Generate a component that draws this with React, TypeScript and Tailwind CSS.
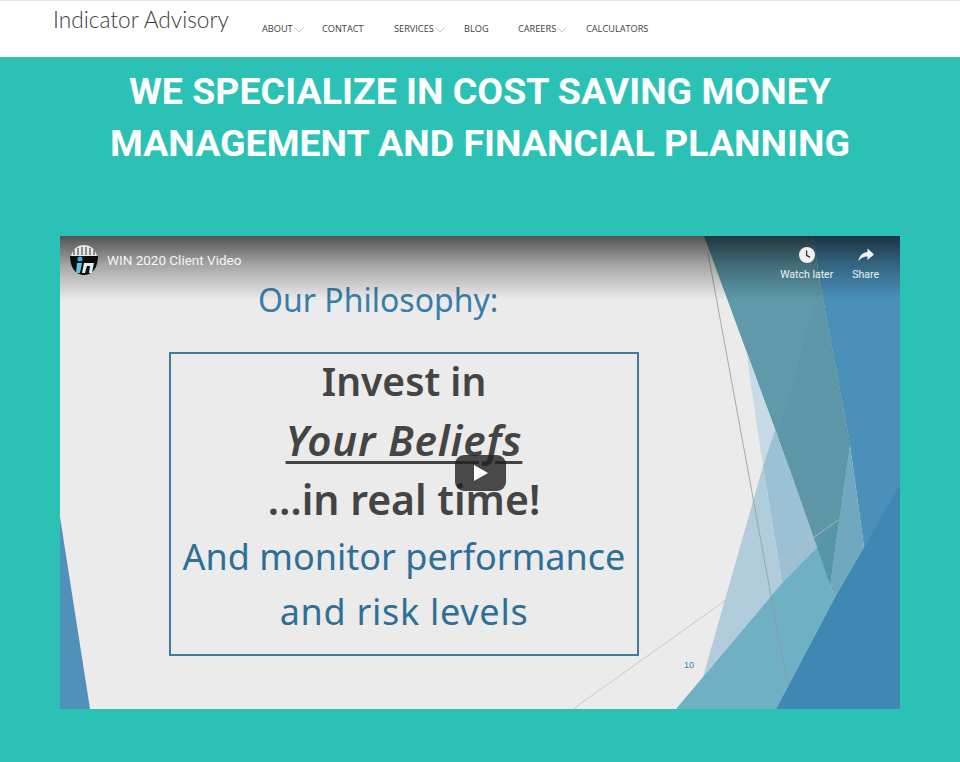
import React from 'react';

const navItems = [
  { label: 'ABOUT', width: 'w-[60px]', caret: true },
  { label: 'CONTACT', width: 'w-[72px]', caret: false },
  { label: 'SERVICES', width: 'w-[70px]', caret: true },
  { label: 'BLOG', width: 'w-[54px]', caret: false },
  { label: 'CAREERS', width: 'w-[68px]', caret: true },
  { label: 'CALCULATORS', width: 'w-auto', caret: false },
];

const Caret = () => (
  <svg width="10" height="6" viewBox="0 0 10 6" className="ml-[1px] mt-[2px]">
    <path d="M0.5 0.5 L5 5 L9.5 0.5" fill="none" stroke="#b5b5b5" strokeWidth="0.8" />
  </svg>
);

const Header = () => (
  <header className="h-[57px] bg-white border-t border-[#e4e4e4] flex">
    <div className="ml-[53px] w-[209px] mt-[4px] font-['Lato'] font-light text-[22.7px] leading-[30px] text-[#3c3c3c]">
      Indicator Advisory
    </div>
    <nav className="flex items-start pt-[21px] font-['Open_Sans'] text-[9.2px] leading-[14px] text-[#3d3d3d]">
      {navItems.map((item) => (
        <div key={item.label} className={`flex items-center ${item.width}`}>
          <span>{item.label}</span>
          {item.caret && <Caret />}
        </div>
      ))}
    </nav>
  </header>
);

const SlideArt = () => (
  <svg className="absolute inset-0 w-full h-full" viewBox="60 236 840 473">
    <rect x="60" y="236" width="840" height="473" fill="#ebebeb" />
    <polygon points="60,517 60,709 90,709" fill="#5191b9" />
    <polygon points="813,236 900,236 900,490 864,547 850,445 820,283" fill="#4a90b9" />
    <polygon points="704,236 813,236 820,283 850,445 830,585 790,470" fill="#5f99aa" />
    <polygon points="820,283 850,445 830,585 790,470 778,437" fill="#5c96a7" />
    <polygon points="746,350 775,430 763,466 759,440" fill="#c7dae5" />
    <polygon points="775,430 790,470 817,547 782,583 763,466" fill="#9cc0d4" />
    <polygon points="763,466 782,583 703,677" fill="#b1cddc" />
    <polygon points="850,445 864,547 835,597 830,585" fill="#70a8c0" />
    <polygon points="817,547 838,520 830,585" fill="#5596a6" />
    <polygon points="676,709 703,677 782,583 817,547 830,585 835,597 776,709" fill="#70b0c4" />
    <polygon points="900,485 900,709 776,709 835,597 864,547" fill="#3f88b4" />
    <line x1="708" y1="253" x2="787" y2="683" stroke="#8f9a9e" strokeWidth="0.8" />
    <line x1="573" y1="709" x2="838" y2="520" stroke="#b9c0c3" strokeWidth="0.8" />
  </svg>
);

const ChannelLogo = () => (
  <svg width="28" height="31" viewBox="0 0 28 31" className="shrink-0">
    <path d="M1 11 C3 3 9 0 14 0 C19 0 25 3 27 11 Z" fill="#e8e8e8" />
    <path d="M4 10 V5 M8 10 V3 M12 10 V2 M16 10 V2 M20 10 V3 M24 10 V5" stroke="#333" strokeWidth="1" />
    <path d="M0 11 H28 C28 23 22 30 14 30 C6 30 0 23 0 11 Z" fill="#0c0c0c" />
    <circle cx="10" cy="14" r="2.5" fill="#36b4d6" />
    <path d="M7 18 H12 L10 28 H6 Z" fill="#5cc4e0" />
    <path d="M14 18 H24 L22 28 H19 L20 21 H17 L15 28 H12 Z" fill="#d9eef5" />
  </svg>
);

const VideoEmbed = () => (
  <div className="relative h-[473px] overflow-hidden">
    <SlideArt />

    {/* slide text */}
    <div className="relative w-[688px] font-['Noto_Sans',sans-serif]">
      <div className="pt-[41px] pl-[198px] text-[32px] leading-[46px] text-[#3a7ea8]">Our Philosophy:</div>
      <div className="ml-[109px] mt-[29px] w-[470px] h-[304px] border-2 border-[#3f7e9a] text-center">
        <div className="-mt-[2px] text-[39px] leading-[58px] font-semibold text-[#444444]">Invest in</div>
        <div className="mt-[1px] text-[42px] leading-[58px] font-semibold italic tracking-[0.02em] text-[#444444] underline decoration-[3px] underline-offset-[5px]">
          Your Beliefs
        </div>
        <div className="mt-[1px] text-[41px] leading-[58px] font-semibold text-[#444444]">…in real time!</div>
        <div className="mt-[1px] text-[36px] leading-[55px] text-[#2f6f96]">And monitor performance</div>
        <div className="text-[36px] leading-[55px] tracking-[0.02em] text-[#2f6f96]">and risk levels</div>
      </div>
    </div>
    <div className="absolute left-[624px] top-[424px] font-['Liberation_Sans'] text-[9px] leading-[10px] text-[#3a85ad]">10</div>

    {/* player chrome */}
    <div className="absolute inset-x-0 top-0 h-[64px] bg-gradient-to-b from-black/65 via-black/30 via-45% to-transparent" />
    <div className="absolute inset-x-0 top-0 flex items-start justify-between font-['Roboto'] text-white/90">
      <div className="flex items-center pl-[10px] pt-[8px]">
        <ChannelLogo />
        <span className="ml-[9px] text-[13.5px] leading-[32px]">WIN 2020 Client Video</span>
      </div>
      <div className="flex pr-[21px] pt-[10px] text-[10.5px] leading-[14px]">
        <div className="flex flex-col items-center mr-[19px]">
          <svg width="18" height="18" viewBox="0 0 18 18">
            <circle cx="9" cy="9" r="8" fill="#f1f1f1" />
            <path d="M8.6 4.5 V9.3 L12 11.4" fill="none" stroke="#333" strokeWidth="1.3" />
          </svg>
          <span className="mt-[4px]">Watch later</span>
        </div>
        <div className="flex flex-col items-center">
          <svg width="18" height="18" viewBox="0 0 18 18">
            <path d="M10.5 2.5 L17 8.5 L10.5 14 V10.6 C6.5 10.6 3.4 12 1.2 15.5 C2 10.5 5 6.5 10.5 6 Z" fill="#f1f1f1" />
          </svg>
          <span className="mt-[4px]">Share</span>
        </div>
      </div>
    </div>
    <div className="absolute left-[395px] top-[219px] w-[51px] h-[36px] rounded-[9px] bg-[#212121]/80 flex items-center justify-center">
      <svg width="16" height="18" viewBox="0 0 16 18">
        <path d="M1 1 L15 9 L1 17 Z" fill="#ffffff" />
      </svg>
    </div>
  </div>
);

export default function App() {
  return (
    <div className="h-[762px] w-[960px] overflow-hidden bg-[#2bc2b5]">
      <Header />
      <main className="px-[60px]">
        <h1 className="font-['Roboto'] font-bold text-[37.5px] leading-[52px] text-white text-center pt-[8px] h-[179px]">
          WE SPECIALIZE IN COST SAVING MONEY
          <br />
          MANAGEMENT AND FINANCIAL PLANNING
        </h1>
        <VideoEmbed />
      </main>
    </div>
  );
}
